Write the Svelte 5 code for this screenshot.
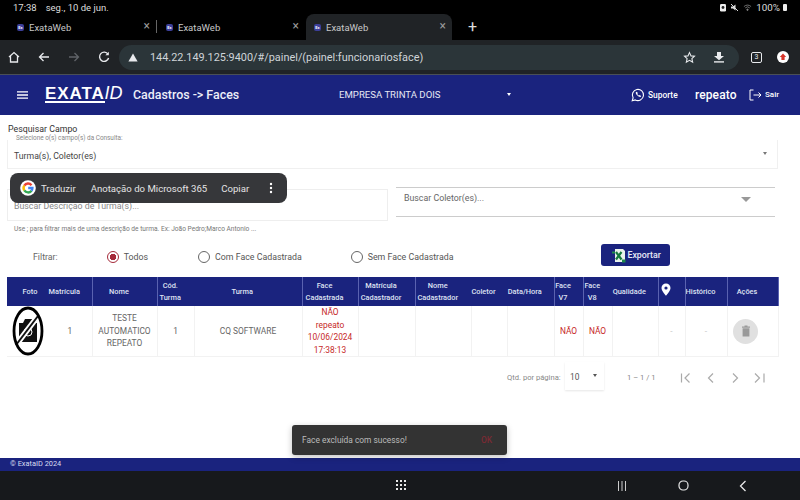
<script>
  const tabs = [
    { title: "ExataWeb", active: false },
    { title: "ExataWeb", active: false },
    { title: "ExataWeb", active: true }
  ];

  const columns = [
    { label: ["Foto"], w: 41, noline: true, first: true },
    { label: ["Matrícula"], w: 44 },
    { label: ["Nome"], w: 65 },
    { label: ["Cód.", "Turma"], w: 37, noline: true },
    { label: ["Turma"], w: 108 },
    { label: ["Face", "Cadastrada"], w: 56 },
    { label: ["Matrícula", "Cadastrador"], w: 57 },
    { label: ["Nome", "Cadastrador"], w: 56, noline: true },
    { label: ["Coletor"], w: 36, noline: true },
    { label: ["Data/Hora"], w: 47 },
    { label: ["Face", "V7"], w: 29 },
    { label: ["Face", "V8"], w: 29, noline: true },
    { label: ["Qualidade"], w: 46 },
    { label: [], w: 27, pin: true },
    { label: ["Histórico"], w: 42 },
    { label: ["Ações"], w: 51 }
  ];
</script>

<div class="screen">
  <div class="status">
    <span class="time">17:38</span>
    <span class="date">seg., 10 de jun.</span>
    <span class="status-right">
      <svg width="6" height="9" viewBox="0 0 6 9"><rect y="1" width="6" height="7.5" rx="1.2" fill="#eee"/><circle cx="3" cy="4.5" r="1.4" fill="#222"/></svg>
      <svg width="9" height="9" viewBox="0 0 9 9"><path d="M1 3.5h2L5.5 1.500v6L3 5.500H1z" fill="#ddd"/><path d="M1 1l7 7" stroke="#ddd" stroke-width="1"/></svg>
      <svg width="9" height="9" viewBox="0 0 10 9" fill="none" stroke="#888" stroke-width="0.9"><path d="M1 3.500a5.600 5.600 0 0 1 8 0M2.500 5a3.500 3.500 0 0 1 5 0"/><circle cx="5" cy="7" r="0.8" fill="#888"/></svg>
      <span class="pct">100%</span>
      <span class="battery"></span>
    </span>
  </div>

  <div class="tabstrip">
    {#each tabs as tab, i}
      <div class="tab" class:active={tab.active}>
        <span class="favicon">Ex</span>
        <span class="tab-title">{tab.title}</span>
        <span class="tab-close">×</span>
        {#if i === 0}<span class="tab-sep"></span>{/if}
      </div>
    {/each}
    <span class="new-tab">+</span>
  </div>

  <div class="toolbar">
    <svg class="home" width="14" height="14" viewBox="0 0 14 14" fill="none" stroke="#e8eaed" stroke-width="1.3"><path d="M2 7l5-4.500L12 7M3.500 6v6h7V6"/></svg>
    <svg class="back" width="14" height="14" viewBox="0 0 14 14" fill="none" stroke="#e8eaed" stroke-width="1.3"><path d="M12 7H2.500M6.500 3L2.500 7l4 4"/></svg>
    <svg class="forward" width="14" height="14" viewBox="0 0 14 14" fill="none" stroke="#5f6368" stroke-width="1.3"><path d="M2 7h9.500M7.500 3l4 4-4 4"/></svg>
    <svg class="reload" width="14" height="14" viewBox="0 0 14 14" fill="none" stroke="#e8eaed" stroke-width="1.4"><path d="M11 4.200A4.600 4.600 0 1 0 11.600 8"/><path d="M11.800 1.800v3.400H8.400" fill="#e8eaed" stroke="none"/></svg>
    <div class="omnibox">
      <svg width="10" height="9" viewBox="0 0 10 9"><path d="M5 .5L9.600 8.500H.4z" fill="#e8eaed"/></svg>
      <span class="url">144.22.149.125:9400/#/painel/(painel:funcionariosface)</span>
      <svg class="star" width="13" height="13" viewBox="0 0 24 24" fill="none" stroke="#e8eaed" stroke-width="2"><path d="M12 3l2.800 6 6.400.7-4.800 4.400 1.400 6.400L12 17.200l-5.800 3.300 1.400-6.400L2.800 9.700 9.200 9z"/></svg>
      <svg class="download" width="12" height="12" viewBox="0 0 12 12"><path d="M4 1h4v4h3L6 9.200 1 5h3z" fill="#e8eaed"/><rect x="1" y="10.200" width="10" height="1.400" fill="#e8eaed"/></svg>
    </div>
    <span class="tabcount">3</span>
    <svg class="profile" width="12" height="12" viewBox="0 0 12 12"><circle cx="6" cy="6" r="6" fill="#fff"/><path d="M6 2.600L9.200 6H7.600v3H4.400V6H2.800z" fill="#d8352a"/></svg>
  </div>

  <header class="appbar">
    <svg class="burger" width="11" height="8" viewBox="0 0 11 8"><path d="M0 .8h11M0 4h11M0 7.200h11" stroke="#fff" stroke-width="1.3"/></svg>
    <span class="logo"><b>EXATA</b><i>ID</i></span>
    <span class="page-title">Cadastros -&gt; Faces</span>
    <span class="company">EMPRESA TRINTA DOIS</span>
    <span class="caret white"></span>
    <svg class="wa" width="14" height="14" viewBox="0 0 14 14" fill="none" stroke="#fff" stroke-width="1.1"><path d="M1.200 12.800l.9-3A5.600 5.600 0 1 1 4.300 11.900z"/><path d="M4.800 4.300c-.5 1.800 2.800 5 4.700 4.600l.6-1-1.500-.8-.6.500c-.7-.3-1.400-1-1.700-1.700l.5-.6-.8-1.500z" fill="#fff" stroke="none"/></svg>
    <span class="support">Suporte</span>
    <span class="user">repeato</span>
    <svg class="logout" width="13" height="12" viewBox="0 0 13 12" fill="none" stroke="#fff" stroke-width="1"><path d="M4.500 1H1v10h3.500M4.500 6H12M9.500 3.500L12 6 9.500 8.500"/></svg>
    <span class="sair">Sair</span>
  </header>

  <main class="content">
    <div class="field-title">Pesquisar Campo</div>
    <div class="select-box">
      <span class="legend">Selecione o(s) campo(s) da Consulta:</span>
      <span class="value">Turma(s), Coletor(es)</span>
      <span class="caret"></span>
    </div>

    <div class="search-row">
      <div class="search-left">
        <div class="input-box">Buscar Descrição de Turma(s)...</div>
        <div class="hint">Use ; para filtrar mais de uma descrição de turma. Ex: João Pedro;Marco Antonio ...</div>
      </div>
      <div class="coletor">
        <span>Buscar Coletor(es)...</span>
        <span class="caret big"></span>
      </div>
    </div>

    <div class="filter-row">
      <span class="filter-label">Filtrar:</span>
      <span class="radio checked r1"></span><span class="radio-text">Todos</span>
      <span class="radio r2"></span><span class="radio-text">Com Face Cadastrada</span>
      <span class="radio r3"></span><span class="radio-text">Sem Face Cadastrada</span>
      <button class="export">
        <svg width="14" height="15" viewBox="0 0 14 15"><path d="M3 1h8l2 2v11H3z" fill="#e9f2ea"/><path d="M0 3.500h3v2H0z" fill="#1f8a4c"/><path d="M4 4l5.500 7.500M9.500 4L4 11.500" stroke="#157a3d" stroke-width="2.200"/><path d="M10 11.500h3.500v3H10z" fill="#1f8a4c"/></svg>
        <span class="export-text">Exportar</span>
      </button>
    </div>

    <table>
      <colgroup>
        {#each columns as col}<col style="width:{col.w}px" />{/each}
      </colgroup>
      <thead>
        <tr>
          {#each columns as col}
            <th class:noline={col.noline} class:first={col.first}>
              {#if col.pin}
                <svg width="10" height="13" viewBox="0 0 10 13"><path d="M5 .5A4.500 4.500 0 0 0 .5 5C.5 8 5 12.800 5 12.800S9.500 8 9.500 5A4.500 4.500 0 0 0 5 .5z" fill="#fff"/><circle cx="5" cy="5" r="1.600" fill="#1a237e"/></svg>
              {:else}
                {#each col.label as line}<div>{line}</div>{/each}
              {/if}
            </th>
          {/each}
        </tr>
      </thead>
      <tbody>
        <tr>
          <td class="photo">
            <svg width="33" height="50" viewBox="0 0 33 50">
              <path d="M8 17h4l2-4h7l2 4h3v19H8z" fill="#111"/>
              <circle cx="17" cy="26" r="4" fill="none" stroke="#fff" stroke-width="1"/>
              <path d="M5 39L27 10" stroke="#fff" stroke-width="5.500"/>
              <path d="M5 39L27 10" stroke="#111" stroke-width="2"/>
              <ellipse cx="17" cy="25" rx="14" ry="23" fill="none" stroke="#000" stroke-width="2.800"/>
            </svg>
          </td>
          <td>1</td>
          <td>TESTE AUTOMATICO REPEATO</td>
          <td>1</td>
          <td>CQ SOFTWARE</td>
          <td class="no">NÃO<br />repeato<br />10/06/2024<br />17:38:13</td>
          <td></td>
          <td></td>
          <td></td>
          <td></td>
          <td class="no">NÃO</td>
          <td class="no">NÃO</td>
          <td></td>
          <td class="faint">-</td>
          <td class="faint">-</td>
          <td class="actions">
            <span class="trash">
              <svg width="10" height="12" viewBox="0 0 10 12"><path d="M1 1.500h8v1.200H1zM1.600 3.300h6.800v8.200H1.600zM3.500.5h3v1h-3z" fill="#9a9a9a"/></svg>
            </span>
          </td>
        </tr>
      </tbody>
    </table>

    <div class="paginator">
      <span class="per-page">Qtd. por página:</span>
      <span class="page-select">10<span class="caret"></span></span>
      <span class="range">1 – 1 / 1</span>
      <svg width="100" height="12" viewBox="0 0 100 12" fill="none" stroke="#aaa" stroke-width="1.200">
        <path d="M1.500 1.500v9M9.500 1.500L5 6l4.500 4.500"/>
        <path d="M33 1.500L28.500 6l4.500 4.500"/>
        <path d="M53 1.500L57.500 6 53 10.500"/>
        <path d="M75 1.500L79.500 6 75 10.500M84 1.500v9"/>
      </svg>
    </div>

    <div class="toast">
      <span>Face excluída com sucesso!</span>
      <span class="toast-ok">OK</span>
    </div>
  </main>

  <footer class="footer">© ExataID 2024</footer>

  <div class="navbar">
    <svg class="apps" width="11" height="11" viewBox="0 0 11 11" fill="#e8e8e8">
      {#each [0, 1, 2] as y}{#each [0, 1, 2] as x}<rect x={x * 4} y={y * 4} width="2" height="2" />{/each}{/each}
    </svg>
    <svg class="recents" width="10" height="10" viewBox="0 0 10 10"><path d="M1.500 0v10M5 0v10M8.500 0v10" stroke="#ccc" stroke-width="1"/></svg>
    <svg class="homebtn" width="11" height="11" viewBox="0 0 11 11" fill="none" stroke="#e8e8e8" stroke-width="1.200"><rect x="1" y="1" width="9" height="9" rx="4"/></svg>
    <svg class="backbtn" width="8" height="12" viewBox="0 0 8 12" fill="none" stroke="#e8e8e8" stroke-width="1.300"><path d="M6.500 1L1.500 6l5 5"/></svg>
  </div>

  <div class="text-menu">
    <svg width="16" height="16" viewBox="0 0 16 16">
      <circle cx="8" cy="8" r="7.800" fill="#fff"/>
      <g fill="none" stroke-width="2.400">
        <path d="M11.500 5.200A4.400 4.400 0 0 0 4.300 5.600" stroke="#ea4335"/>
        <path d="M4.300 5.600a4.400 4.400 0 0 0 0 4.800" stroke="#fbbc05"/>
        <path d="M4.300 10.400a4.400 4.400 0 0 0 7.200.3" stroke="#34a853"/>
        <path d="M11.500 10.700A4.400 4.400 0 0 0 12.400 8H8.200" stroke="#4285f4"/>
      </g>
    </svg>
    <span class="menu-item m1">Traduzir</span>
    <span class="menu-item m2">Anotação do Microsoft 365</span>
    <span class="menu-item m3">Copiar</span>
    <svg class="dots" width="4" height="12" viewBox="0 0 4 12" fill="#fff"><circle cx="2" cy="2" r="1.200"/><circle cx="2" cy="6" r="1.200"/><circle cx="2" cy="10" r="1.200"/></svg>
  </div>
</div>

<style>
  :global(body) {
    margin: 0;
    background: #fff;
  }

  .screen {
    position: relative;
    width: 800px;
    height: 500px;
    overflow: hidden;
    display: flex;
    flex-direction: column;
    font-family: Roboto, "Liberation Sans", sans-serif;
    color: #444;
  }

  .status {
    height: 14px;
    flex: none;
    background: #000;
    color: #ddd;
    font-size: 9.5px;
    display: flex;
    align-items: center;
    padding-left: 13px;
  }
  .date {
    margin-left: 9px;
  }
  .status-right {
    margin-left: auto;
    display: flex;
    align-items: center;
    gap: 4px;
    padding-right: 13px;
  }
  .pct {
    font-size: 9.8px;
  }
  .battery {
    width: 4px;
    height: 7px;
    margin-left: -1px;
    background: #eee;
    border-radius: 1px;
  }

  .tabstrip {
    height: 26px;
    flex: none;
    background: #000;
    display: flex;
    align-items: center;
    padding-left: 7px;
    color: #c8c8c8;
    font-size: 9.5px;
  }
  .tab {
    position: relative;
    width: 149px;
    height: 100%;
    display: flex;
    align-items: center;
    padding-left: 10px;
    box-sizing: border-box;
  }
  .tab.active {
    background: #202326;
    border-radius: 8px 8px 0 0;
    padding-left: 8px;
    width: 146px;
    margin-left: 1px;
  }
  .favicon {
    width: 7px;
    height: 7px;
    border-radius: 2px;
    background: #3c3f9a;
    color: #fff;
    font-size: 4px;
    line-height: 7px;
    text-align: center;
    font-weight: 700;
  }
  .tab-title {
    margin-left: 5px;
  }
  .tab-close {
    position: absolute;
    right: 6px;
    top: 5px;
    font-size: 12px;
    line-height: 14px;
    color: #999;
  }
  .tab-sep {
    position: absolute;
    right: -1px;
    top: 6px;
    width: 1px;
    height: 13px;
    background: #666;
  }
  .new-tab {
    margin-left: 16px;
    font-size: 16px;
    line-height: 16px;
    color: #ddd;
  }

  .toolbar {
    height: 35px;
    flex: none;
    background: #202326;
    border-bottom: 1px solid #4a4f55;
    box-sizing: border-box;
    display: flex;
    align-items: center;
    padding-left: 7px;
  }
  .back,
  .forward,
  .reload {
    margin-left: 16px;
  }
  .omnibox {
    margin-left: 8px;
    width: 620px;
    height: 25px;
    border-radius: 13px;
    background: #2b3539;
    display: flex;
    align-items: center;
    padding-left: 9px;
    box-sizing: border-box;
  }
  .url {
    margin-left: 12px;
    color: #cfd4d8;
    font-size: 10.9px;
    white-space: nowrap;
  }
  .star {
    margin-left: auto;
    margin-right: 1px;
  }
  .download {
    margin-left: 16px;
    margin-right: 14px;
  }
  .tabcount {
    margin-left: 12px;
    width: 9px;
    height: 9px;
    border: 1px solid #e8eaed;
    border-radius: 2px;
    font-size: 7px;
    line-height: 9px;
    text-align: center;
    color: #e8eaed;
  }
  .profile {
    margin-left: 15px;
  }

  .appbar {
    height: 40px;
    flex: none;
    box-sizing: border-box;
    padding: 0 0 1px 17px;
    background: #1a237e;
    color: #fff;
    display: flex;
    align-items: center;
    white-space: nowrap;
  }
  .logo {
    margin-left: 17px;
    width: 78px;
    font-size: 17px;
    line-height: 14px;
    font-family: "Liberation Sans", sans-serif;
  }
  .logo b {
    display: inline-block;
    font-weight: 700;
    letter-spacing: 0.9px;
    border-bottom: 2px solid #fff;
    padding-bottom: 0;
  }
  .logo i {
    font-size: 18px;
    font-weight: 400;
  }
  .page-title {
    margin-left: 10px;
    width: 206px;
    font-size: 12.4px;
    font-weight: 500;
    color: #eceef8;
  }
  .company {
    width: 168px;
    font-size: 9.6px;
    color: #e6e8f4;
  }
  .caret {
    width: 0;
    height: 0;
    border-left: 2.5px solid transparent;
    border-right: 2.5px solid transparent;
    border-top: 3px solid #777;
  }
  .caret.white {
    border-top-color: #fff;
  }
  .wa {
    margin-left: 120px;
  }
  .support {
    margin-left: 3px;
    width: 47px;
    font-size: 8.4px;
    font-weight: 500;
  }
  .user {
    width: 54px;
    font-size: 12px;
    font-weight: 500;
    letter-spacing: 0.1px;
  }
  .sair {
    margin-left: 3px;
    font-size: 8px;
    font-weight: 500;
  }

  .content {
    position: relative;
    flex: 1;
    background: #fff;
    padding: 9px 0 0 7px;
    box-sizing: border-box;
    min-height: 0;
  }
  .field-title {
    padding-left: 1px;
    font-size: 8.8px;
    line-height: 10px;
    color: #333;
  }
  .select-box {
    position: relative;
    width: 771px;
    height: 29px;
    margin-top: 6px;
    box-sizing: border-box;
    border: 1px solid #f0f0f0;
    border-top: none;
    display: flex;
    align-items: center;
    padding: 3px 10px 0 6px;
    font-size: 8.7px;
    color: #444;
  }
  .legend {
    position: absolute;
    left: 8px;
    top: -6px;
    font-size: 6.4px;
    line-height: 8px;
    color: #888;
    background: #fff;
    white-space: nowrap;
  }
  .select-box .caret {
    margin-left: auto;
    margin-top: -5px;
  }

  .search-row {
    display: flex;
    margin-top: 18px;
    gap: 8px;
  }
  .search-left {
    width: 381px;
    margin-top: 2px;
  }
  .input-box {
    height: 32px;
    box-sizing: border-box;
    border: 1px solid #eee;
    padding: 11px 0 0 6px;
    font-size: 8.8px;
    line-height: 11px;
    color: #888;
  }
  .hint {
    margin-top: 4px;
    padding-left: 7px;
    font-size: 6.6px;
    line-height: 8px;
    color: #777;
    white-space: nowrap;
  }
  .coletor {
    width: 379px;
    height: 30px;
    box-sizing: border-box;
    border-top: 1px solid #ccc;
    border-bottom: 1px solid #ccc;
    display: flex;
    justify-content: space-between;
    padding: 5px 24px 0 8px;
    font-size: 8.8px;
    line-height: 11px;
    color: #666;
  }
  .caret.big {
    border-left-width: 5px;
    border-right-width: 5px;
    border-top-width: 5px;
    border-top-color: #999;
    margin-top: 4px;
  }

  .filter-row {
    position: relative;
    height: 30px;
    margin-top: 9px;
    font-size: 8.8px;
    display: flex;
    align-items: center;
    color: #555;
  }
  .filter-label {
    margin-left: 26px;
    color: #666;
  }
  .radio {
    width: 12px;
    height: 12px;
    box-sizing: border-box;
    border: 1px solid #666;
    border-radius: 50%;
    flex: none;
  }
  .radio.checked {
    border-color: #a52a3a;
    background: radial-gradient(circle, #a52a3a 0 3px, #fff 3.5px);
  }
  .r1 {
    margin-left: 49px;
  }
  .r2 {
    margin-left: 50px;
  }
  .r3 {
    margin-left: 49px;
  }
  .radio-text {
    margin-left: 5px;
    white-space: nowrap;
  }
  .export {
    margin-left: 148px;
    width: 69px;
    height: 22px;
    margin-top: -4px;
    border: none;
    border-radius: 3px;
    background: #1a237e;
    color: #e8eaf6;
    font: 500 8.8px Roboto, sans-serif;
    display: flex;
    align-items: center;
    padding: 0 0 0 11px;
    white-space: nowrap;
  }
  .export-text {
    margin-left: 1px;
  }

  table {
    width: 771px;
    table-layout: fixed;
    border-collapse: collapse;
    margin-top: 5px;
  }
  th {
    height: 29px;
    padding: 0 11px 0 0;
    background: #1a237e;
    color: #dfe2f2;
    font-size: 7.4px;
    line-height: 12px;
    font-weight: 500;
    text-align: center;
    border-right: 1px solid #5a62b0;
    white-space: nowrap;
    overflow: hidden;
  }
  th.noline {
    border-right: none;
  }
  th.first {
    padding: 0 0 0 5px;
  }
  td {
    height: 50px;
    padding: 0 3px;
    box-sizing: border-box;
    text-align: center;
    font-size: 8.4px;
    line-height: 12.5px;
    color: #666;
    border-right: 1px solid #f2f2f2;
    border-bottom: 1px solid #f2f2f2;
  }
  td.photo {
    padding: 0;
    line-height: 0;
    border: none;
    border-bottom: 1px solid #f2f2f2;
  }
  td.no {
    color: #c62828;
    padding: 0;
  }
  td.faint {
    color: #ccc;
  }
  td.actions {
    padding: 0 14px 0 0;
  }
  .trash {
    display: inline-flex;
    width: 25px;
    height: 25px;
    border-radius: 50%;
    background: #e0e0e0;
    align-items: center;
    justify-content: center;
    vertical-align: middle;
  }

  .paginator {
    display: flex;
    align-items: center;
    margin-top: 5px;
    height: 28px;
    padding-left: 500px;
    font-size: 7.6px;
    color: #888;
    white-space: nowrap;
  }
  .per-page {
    width: 58px;
    margin-top: 3px;
  }
  .page-select {
    width: 39px;
    height: 28px;
    box-sizing: border-box;
    padding: 10px 7px 0 5px;
    display: flex;
    justify-content: space-between;
    align-items: flex-start;
    box-shadow: 0 1px 2px rgba(0, 0, 0, 0.1);
    color: #555;
    font-size: 8.4px;
    line-height: 10px;
  }
  .page-select .caret {
    margin-top: 2px;
    border-top-color: #555;
  }
  .range {
    margin-left: 23px;
    width: 53px;
    margin-top: 3px;
  }
  .paginator svg {
    margin-top: 3px;
  }

  .toast {
    position: absolute;
    left: 292px;
    top: 310px;
    width: 215px;
    height: 30px;
    box-sizing: border-box;
    background: #333;
    border-radius: 3px;
    box-shadow: 0 2px 6px rgba(0, 0, 0, 0.25);
    color: #bbb;
    font-size: 8.4px;
    display: flex;
    align-items: center;
    justify-content: space-between;
    padding: 0 15px 0 10px;
  }
  .toast-ok {
    color: #7b2a33;
    font-weight: 500;
  }

  .footer {
    height: 13px;
    flex: none;
    background: #1a237e;
    color: #d8dbef;
    font-size: 7.4px;
    line-height: 12px;
    padding-left: 10px;
  }

  .navbar {
    height: 29px;
    flex: none;
    background: #17191c;
    display: flex;
    align-items: center;
  }
  .apps {
    margin-left: 396px;
  }
  .recents {
    margin-left: 210px;
  }
  .homebtn {
    margin-left: 51px;
  }
  .backbtn {
    margin-left: 50px;
  }

  .text-menu {
    position: absolute;
    left: 10px;
    top: 173px;
    width: 277px;
    height: 30px;
    border-radius: 8px;
    background: #36373a;
    display: flex;
    align-items: center;
    padding-left: 10px;
    box-sizing: border-box;
    color: #e4e4e4;
    font-size: 9.6px;
    white-space: nowrap;
  }
  .m1 {
    margin-left: 5px;
  }
  .m2 {
    margin-left: 15px;
  }
  .m3 {
    margin-left: 14px;
  }
  .dots {
    margin-left: 20px;
  }
</style>
